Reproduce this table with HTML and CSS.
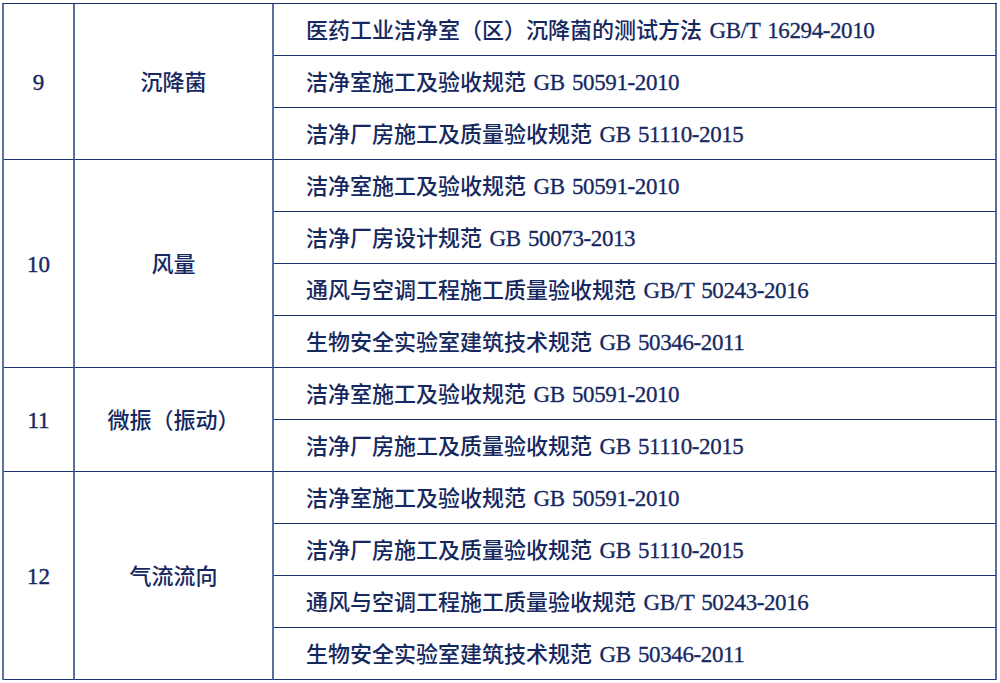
FILE: index.html
```html
<!DOCTYPE html>
<html lang="zh-CN">
<head>
<meta charset="utf-8">
<title>检测标准</title>
<link rel="stylesheet" href="styles.css">
</head>
<body>
<table class="std">
  <colgroup>
    <col class="c-no">
    <col class="c-item">
    <col class="c-std">
  </colgroup>
  <tbody>
    <tr>
      <td class="no" rowspan="3">9</td>
      <td class="item" rowspan="3">沉降菌</td>
      <td class="std-name">医药工业洁净室（区）沉降菌的测试方法 <span class="code">GB/T 16294-2010</span></td>
    </tr>
    <tr><td class="std-name">洁净室施工及验收规范 <span class="code">GB 50591-2010</span></td></tr>
    <tr><td class="std-name">洁净厂房施工及质量验收规范 <span class="code">GB 51110-2015</span></td></tr>

    <tr>
      <td class="no" rowspan="4">10</td>
      <td class="item" rowspan="4">风量</td>
      <td class="std-name">洁净室施工及验收规范 <span class="code">GB 50591-2010</span></td>
    </tr>
    <tr><td class="std-name">洁净厂房设计规范 <span class="code">GB 50073-2013</span></td></tr>
    <tr><td class="std-name">通风与空调工程施工质量验收规范 <span class="code">GB/T 50243-2016</span></td></tr>
    <tr><td class="std-name">生物安全实验室建筑技术规范 <span class="code">GB 50346-2011</span></td></tr>

    <tr>
      <td class="no" rowspan="2">11</td>
      <td class="item" rowspan="2">微振（振动）</td>
      <td class="std-name">洁净室施工及验收规范 <span class="code">GB 50591-2010</span></td>
    </tr>
    <tr><td class="std-name">洁净厂房施工及质量验收规范 <span class="code">GB 51110-2015</span></td></tr>

    <tr>
      <td class="no" rowspan="4">12</td>
      <td class="item" rowspan="4">气流流向</td>
      <td class="std-name">洁净室施工及验收规范 <span class="code">GB 50591-2010</span></td>
    </tr>
    <tr><td class="std-name">洁净厂房施工及质量验收规范 <span class="code">GB 51110-2015</span></td></tr>
    <tr><td class="std-name">通风与空调工程施工质量验收规范 <span class="code">GB/T 50243-2016</span></td></tr>
    <tr><td class="std-name">生物安全实验室建筑技术规范 <span class="code">GB 50346-2011</span></td></tr>
  </tbody>
</table>
</body>
</html>
```

FILE: styles.css
```css
html, body {
  margin: 0;
  padding: 0;
  background: #ffffff;
}

body {
  padding: 3px 0 0 2px;
}

.std {
  border-collapse: separate;
  border-spacing: 0;
  table-layout: fixed;
  width: 995px;
  border-left: 2px solid #5d6f9d;
  border-top: 1px solid #1d3270;
  font-family: "Liberation Serif", "Noto Sans CJK SC", serif;
  font-size: 22px;
  font-weight: 500;
  color: #16295f;
}

.c-no { width: 71px; }
.c-item { width: 199px; }
.c-std { width: 723px; }

.std tr {
  height: 52px;
}

.std td {
  padding: 0;
  border-right: 2px solid #5d6f9d;
  border-bottom: 1px solid #1d3270;
  vertical-align: middle;
  white-space: nowrap;
  line-height: 1;
}

.std td.no,
.std td.item {
  text-align: center;
  padding-top: 2px;
}

.std td.no {
  font-size: 23px;
  -webkit-text-stroke: 0.4px #16295f;
}

.std td.std-name {
  text-align: left;
  padding-left: 32px;
  padding-top: 2px;
}

.code {
  margin-left: 2px;
  font-size: 23px;
  letter-spacing: -0.4px;
  word-spacing: 2px;
  -webkit-text-stroke: 0.3px #16295f;
}
```
